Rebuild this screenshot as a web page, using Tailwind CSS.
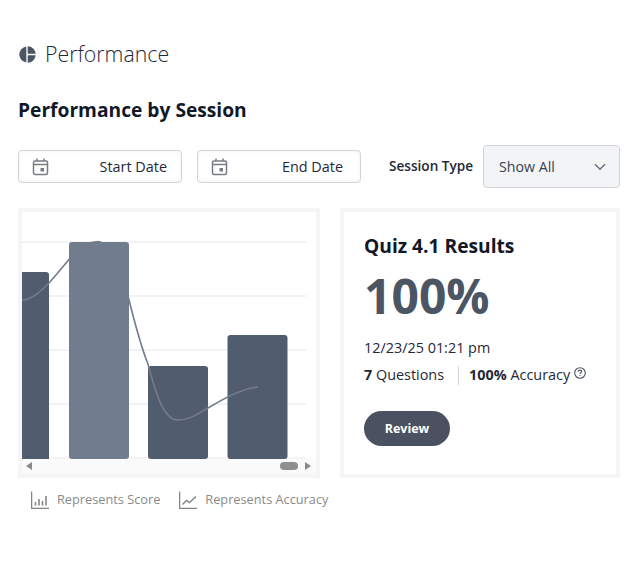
<!DOCTYPE html>
<html lang="en">
<head>
    <meta charset="UTF-8">
    <meta name="viewport" content="width=device-width, initial-scale=1.0">
    <title>Performance</title>
    <script src="https://cdn.jsdelivr.net/npm/@tailwindcss/browser@4"></script>
</head>
<body class="bg-white font-['Open_Sans',sans-serif] text-[#111827]">
    <div class="w-[631px] h-[570px] overflow-hidden pl-[18px] pr-[11px] pt-[38px]">
        <!-- Page title -->
        <div class="flex items-center h-[32px]">
            <svg class="w-[17px] h-[17px] ml-[1px]" viewBox="0 0 17 17">
                <path d="M7.3 0.39A8.2 8.2 0 0 0 7.3 16.61Z" fill="#4b5563"/>
                <path d="M8.7 0.3A8.2 8.2 0 0 1 16.67 7.8H8.7Z" fill="#4b5563"/>
                <path d="M8.7 9.2H16.67A8.2 8.2 0 0 1 8.7 16.7Z" fill="#4b5563"/>
            </svg>
            <h1 class="ml-[9px] text-[21.3px] font-light leading-[32px] text-[#1f2937]">Performance</h1>
        </div>

        <h2 class="mt-[24px] text-[19.2px] font-bold leading-[32px]">Performance by Session</h2>

        <!-- Filters -->
        <div class="mt-[19px] flex items-center h-[43px]">
            <div class="shrink-0 w-[164px] h-[33px] flex items-center justify-between pl-[13px] pr-[14px] border border-[#d1d5db] rounded-[4px] shadow-[inset_0_0_4px_rgba(0,0,0,0.06)]">
                <svg class="w-[17px] h-[18px]" viewBox="0 0 17 18" fill="none" stroke="#777c85" stroke-width="1.5">
                    <rect x="1.5" y="3" width="14" height="13.5" rx="1.5"/>
                    <path d="M1.5 6.5H15.5M5 0.5V3M12 0.5V3"/>
                    <rect x="8.5" y="10" width="3.5" height="3.5" fill="#777c85" stroke="none"/>
                </svg>
                <span class="text-[14.4px] text-[#1f2937]">Start Date</span>
            </div>
            <div class="shrink-0 ml-[15px] w-[164px] h-[33px] flex items-center justify-between pl-[13px] pr-[17px] border border-[#d1d5db] rounded-[4px] shadow-[inset_0_0_4px_rgba(0,0,0,0.06)]">
                <svg class="w-[17px] h-[18px]" viewBox="0 0 17 18" fill="none" stroke="#777c85" stroke-width="1.5">
                    <rect x="1.5" y="3" width="14" height="13.5" rx="1.5"/>
                    <path d="M1.5 6.5H15.5M5 0.5V3M12 0.5V3"/>
                    <rect x="8.5" y="10" width="3.5" height="3.5" fill="#777c85" stroke="none"/>
                </svg>
                <span class="text-[14.4px] text-[#1f2937]">End Date</span>
            </div>
            <span class="shrink-0 w-[84px] ml-[28px] whitespace-nowrap text-[13.6px] font-semibold text-[#1f2937]">Session Type</span>
            <div class="shrink-0 ml-[10px] w-[137px] h-[43px] flex items-center justify-between pl-[15px] pr-[13px] bg-[#f3f4f6] border border-[#d1d5db] rounded-[4px]">
                <span class="text-[14.2px] text-[#374151]">Show All</span>
                <svg class="w-[12px] h-[8px]" viewBox="0 0 12 8" fill="none" stroke="#6b7280" stroke-width="1.6">
                    <path d="M1 1.2L6 6.2L11 1.2"/>
                </svg>
            </div>
        </div>

        <div class="mt-[20px] flex gap-[20px]">
            <div class="w-[302px] shrink-0">
                <!-- Chart card -->
                <div class="w-[302px] h-[270px] border-[4px] border-[#f4f5f7] overflow-hidden">
                    <svg class="block" width="294" height="247" viewBox="22 212 294 247">
                        <path d="M22 242H306M22 296H306M22 350H306M22 404H306M22 458H306" stroke="#e6e7e9" stroke-width="1"/>
                        <path d="M22 272H46a3 3 0 0 1 3 3V459H22Z" fill="#515d6e"/>
                        <rect x="69" y="242" width="60" height="217" rx="3" fill="#717d8e"/>
                        <rect x="148" y="366" width="60" height="93" rx="3" fill="#515d6e"/>
                        <rect x="227.5" y="335" width="60" height="124" rx="3" fill="#515d6e"/>
                        <path d="M22 300C32 300 41 291 50 282C58 273 66 263 72 256C80 247 90 241.500 98 241.500C108 241.500 120 262 128 296C134 320 141 347 148 364C156 395 164 420 178 420C190 420 199 413 208 408C226 397 243 388 258 387" fill="none" stroke="#737b8c" stroke-width="1.600"/>
                    </svg>
                    <div class="relative h-[15px] bg-[#fafafa]">
                        <span class="absolute left-[4px] top-[3px] w-0 h-0 border-y-[4.5px] border-y-transparent border-r-[6px] border-r-[#8a8a8a]"></span>
                        <span class="absolute left-[258px] top-[3px] w-[18px] h-[8px] rounded-full bg-[#8f8f8f]"></span>
                        <span class="absolute left-[283px] top-[3px] w-0 h-0 border-y-[4.5px] border-y-transparent border-l-[6px] border-l-[#8a8a8a]"></span>
                    </div>
                </div>
                <!-- Legend -->
                <div class="mt-[12px] ml-[13px] flex items-center text-[12.75px] text-[#8a8a8a] whitespace-nowrap">
                    <svg class="shrink-0 w-[18px] h-[18px]" viewBox="0 0 18 18" fill="none" stroke="#858585">
                        <path d="M0.600 0.500V17.300H18" stroke-width="1.300"/>
                        <path d="M4.500 14.500V11M8 14.500V8M11.500 14.500V10M15 14.500V5" stroke-width="1.600"/>
                    </svg>
                    <span class="ml-[8px]">Represents Score</span>
                    <svg class="shrink-0 ml-[19px] w-[18px] h-[18px]" viewBox="0 0 18 18" fill="none" stroke="#858585">
                        <path d="M0.600 0.500V17.300H18" stroke-width="1.300"/>
                        <path d="M3.500 13.500L7.500 9.500L10.500 11.500L17 5.500" stroke-width="1.400"/>
                    </svg>
                    <span class="ml-[8px]">Represents Accuracy</span>
                </div>
            </div>

            <!-- Results card -->
            <div class="w-[280px] h-[270px] shrink-0 border-[4px] border-[#f4f5f7] pl-[20px] pt-[21px]">
                <h3 class="text-[19.2px] font-bold leading-[26px]">Quiz 4.1 Results</h3>
                <p class="mt-[6px] text-[48px] font-bold leading-[62px] text-[#4b5563]">100%</p>
                <p class="mt-[11px] text-[14.4px] leading-[20px] text-[#1f2937]">12/23/25 01:21 pm</p>
                <div class="mt-[7px] flex items-center text-[14.4px] leading-[20px] text-[#1f2937]">
                    <span><b class="font-bold">7</b> Questions</span>
                    <span class="ml-[14px] mr-[10px] w-px h-[19px] bg-[#d1d5db]"></span>
                    <span><b class="font-bold">100%</b> Accuracy</span>
                    <svg class="ml-[4px] -mt-[4px] w-[12px] h-[12px]" viewBox="0 0 12 12" fill="none" stroke="#4b5563" stroke-width="1.100">
                        <circle cx="6" cy="6" r="5.300"/>
                        <path d="M4.300 4.700C4.300 3.700 5 3.100 6 3.100C7 3.100 7.700 3.700 7.700 4.500C7.700 5.500 6 5.600 6 7"/>
                        <path d="M6 8V9"/>
                    </svg>
                </div>
                <button class="mt-[26px] w-[86px] h-[35px] pt-px rounded-full bg-[#4a5160] text-white text-[12.5px] font-bold">Review</button>
            </div>
        </div>
    </div>
</body>
</html>
